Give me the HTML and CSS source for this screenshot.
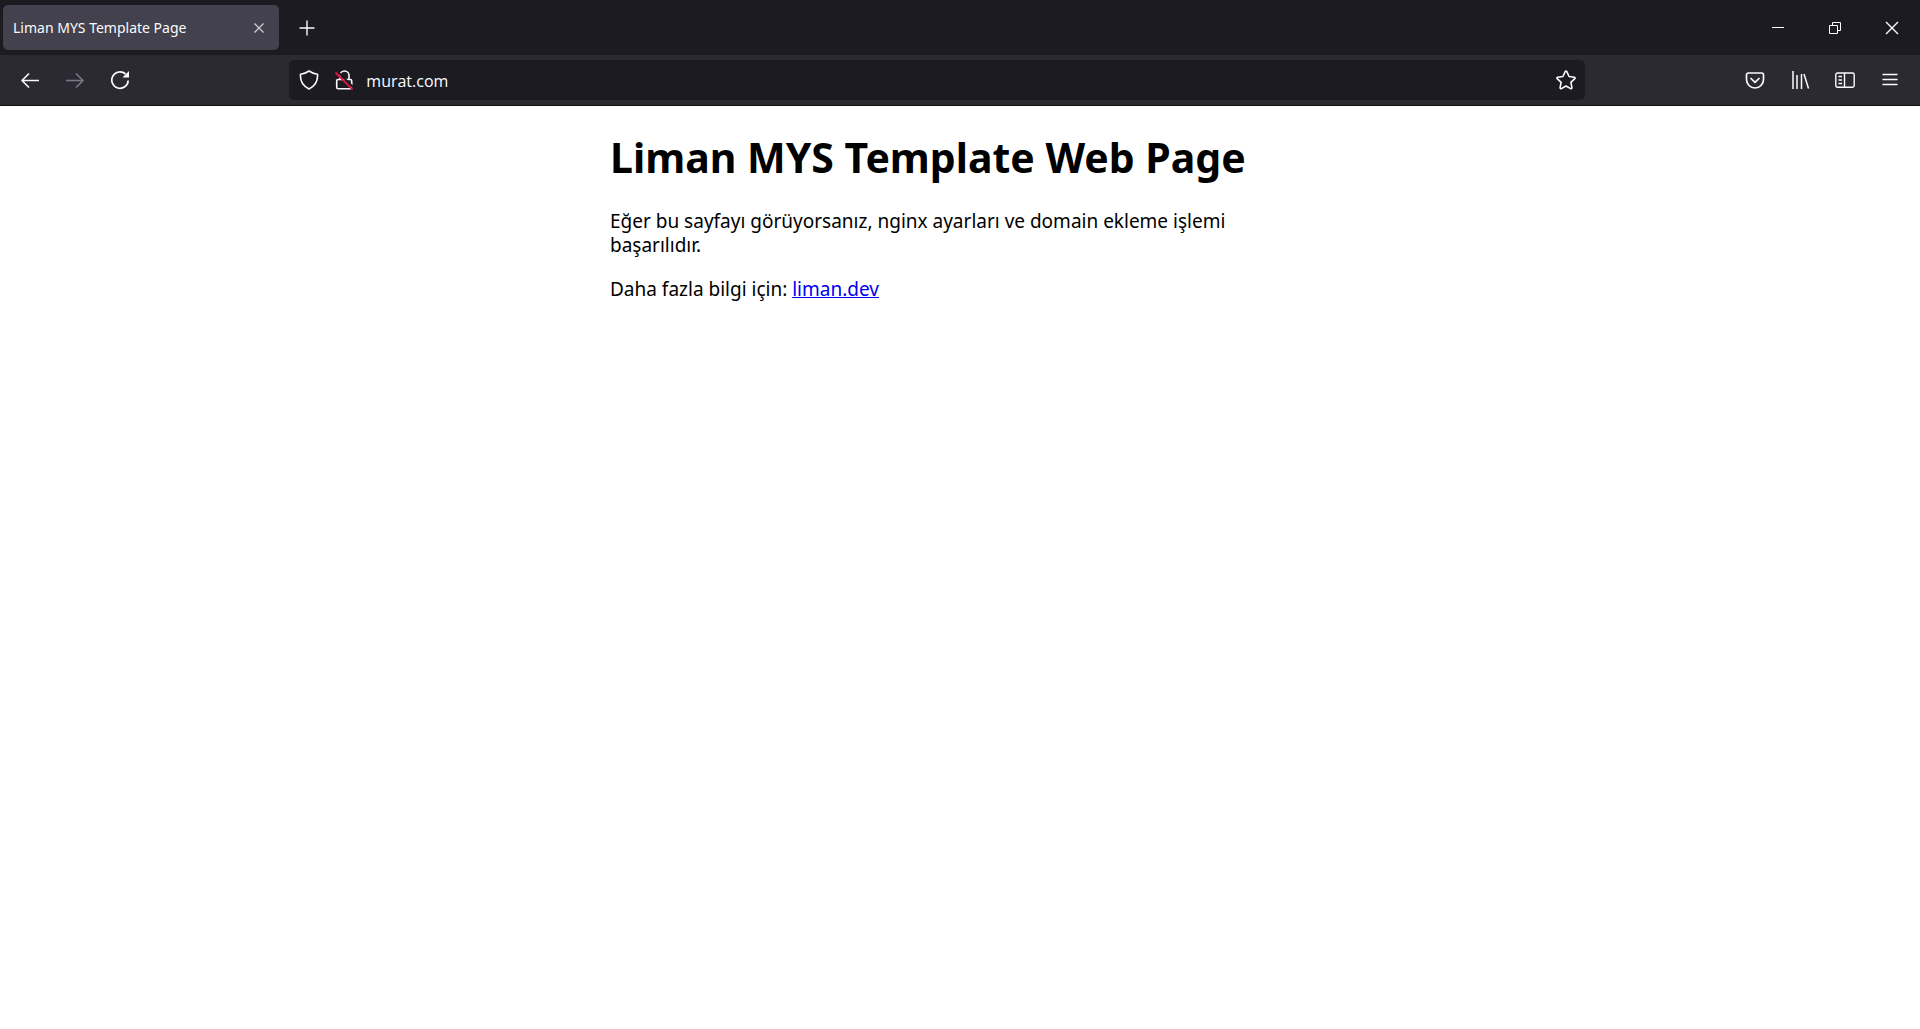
FILE: index.html
```html
<!DOCTYPE html>
<html lang="tr">
<head>
<meta charset="utf-8">
<title>Liman MYS Template Page</title>
<link rel="stylesheet" href="styles.css">
</head>
<body>
<header class="browser">
  <div class="tabbar">
    <div class="tab">
      <span class="tab-title">Liman MYS Template Page</span>
      <button class="tab-close" aria-label="Close tab"><svg width="12" height="12" viewBox="0 0 12 12"><path d="M1.5 1.5l9 9M10.500 1.500l-9 9"/></svg></button>
    </div>
    <button class="new-tab" aria-label="New tab"><svg width="16" height="16" viewBox="0 0 16 16"><path d="M8 .5v15M.5 8h15"/></svg></button>
    <div class="window-controls">
      <button class="window-button" aria-label="Minimize"><svg width="14" height="14" viewBox="0 0 14 14"><path d="M1 6.500h12" stroke-width="1"/></svg></button>
      <button class="window-button" aria-label="Restore"><svg width="14" height="14" viewBox="0 0 14 14"><path d="M1.500 4.500h8v8h-8zM4.500 4V1.500h8v8H10" stroke-width="1"/></svg></button>
      <button class="window-button" aria-label="Close"><svg width="14" height="14" viewBox="0 0 14 14"><path d="M1 1l12 12M13 1L1 13"/></svg></button>
    </div>
  </div>
  <nav class="toolbar">
    <button class="tool" aria-label="Back"><svg width="20" height="20" viewBox="0 0 20 20"><path d="M19 10.500H2M9 3.500l-7 7 7 7" stroke-width="1.600"/></svg></button>
    <button class="tool" aria-label="Forward" disabled><svg width="20" height="20" viewBox="0 0 20 20"><path d="M1 10.500h17M11 3.500l7 7-7 7" stroke-width="1.600"/></svg></button>
    <button class="tool" aria-label="Reload"><svg width="20" height="20" viewBox="0 0 20 20"><path d="M15.500 4A8.200 8.200 0 1 0 18.200 10.500" stroke-width="1.700"/><path class="solid" d="M19 1v6.500h-6.500z"/></svg></button>
    <div class="spring"></div>
    <div class="urlbar">
      <button class="url-icon" aria-label="Tracking protection"><svg width="20" height="20" viewBox="0 0 20 20"><path d="M10 1C7.500 2.800 5 3.700 1.500 4.200C1 10.500 3.800 16 10 19C16.200 16 19 10.500 18.500 4.200C15 3.700 12.500 2.800 10 1z" stroke-width="1.600"/></svg></button>
      <button class="url-icon" aria-label="Connection is not secure"><svg width="20" height="20" viewBox="0 0 20 20"><path d="M6 9.500V5.500a4.500 4.500 0 0 1 9 0v4h1.200a1.500 1.500 0 0 1 1.500 1.500v6.300a1.500 1.500 0 0 1-1.500 1.500H4.200a1.500 1.500 0 0 1-1.500-1.500V11a1.500 1.500 0 0 1 1.500-1.500H15" stroke-width="1.600"/><path class="gap" d="M3.500 1.500l16 16"/><path class="slash" d="M1.500 2.500l17 17"/></svg></button>
      <input class="address" type="text" aria-label="Address" value="murat.com">
      <button class="url-icon" aria-label="Bookmark this page"><svg width="20" height="20" viewBox="0 0 20 20"><path d="M9.200 1.600a.9.900 0 0 1 1.600 0l2.300 4.900 5.200.7a.9.900 0 0 1 .5 1.500l-3.900 3.700 1 5.300a.9.900 0 0 1-1.300.9L10 16l-4.600 2.600a.9.900 0 0 1-1.300-.9l1-5.300-3.900-3.700a.9.900 0 0 1 .5-1.500l5.200-.7z" stroke-width="1.600"/></svg></button>
    </div>
    <div class="spring"></div>
    <button class="tool" aria-label="Save to Pocket"><svg width="20" height="20" viewBox="0 0 20 20"><path d="M3.200 3h13.600A1.700 1.700 0 0 1 18.500 4.700V9.500a8.500 8.500 0 0 1-17 0V4.700A1.700 1.700 0 0 1 3.200 3zM5.500 8l4.500 4.300L14.500 8" stroke-width="1.700"/></svg></button>
    <button class="tool" aria-label="Library"><svg width="20" height="20" viewBox="0 0 20 20"><path d="M3 1v18M7 5v14M11.500 4v15M14 4l4.500 14.500" stroke-width="1.500"/></svg></button>
    <button class="tool" aria-label="Sidebars"><svg width="20" height="20" viewBox="0 0 20 20"><path d="M2.500 3h15A1.700 1.700 0 0 1 19.200 4.700v10.800a1.700 1.700 0 0 1-1.700 1.700h-15A1.700 1.700 0 0 1 .8 15.500V4.700A1.700 1.700 0 0 1 2.500 3zM9.500 3v14M3.500 6.500H7M3.500 10H7M3.500 13.500H7"/></svg></button>
    <button class="tool" aria-label="Menu"><svg width="20" height="20" viewBox="0 0 20 20"><path d="M3 4.500h14M3 9.500h14M3 14.500h14" stroke-linecap="round"/></svg></button>
  </nav>
</header>
<main class="page">
  <h1 class="heading">Liman MYS Template Web Page</h1>
  <p class="text">Eğer bu sayfayı görüyorsanız, nginx ayarları ve domain ekleme işlemi başarılıdır.</p>
  <p class="text">Daha fazla bilgi için: <a class="link" href="https://liman.dev">liman.dev</a></p>
</main>
</body>
</html>
```
FILE: styles.css
```css
* {
  box-sizing: border-box;
}

body {
  margin: 0;
  background: #fff;
  color: #000;
  font-family: "Noto Sans", "Open Sans", sans-serif;
}

button {
  display: flex;
  align-items: center;
  justify-content: center;
  flex: none;
  padding: 0;
  border: 0;
  background: none;
  color: #fbfbfe;
}

svg {
  display: block;
  fill: none;
  stroke: currentColor;
  stroke-width: 1.4;
  stroke-linejoin: round;
}

.browser {
  border-bottom: 1px solid #0c0c0d;
  background: #2b2a33;
  color: #fbfbfe;
}

.tabbar {
  display: flex;
  align-items: center;
  height: 55px;
  padding-left: 3px;
  background: #1c1b22;
}

.tab {
  display: flex;
  align-items: center;
  justify-content: space-between;
  width: 276px;
  height: 45px;
  padding: 0 5px 0 10px;
  border-radius: 5px;
  background: #42414d;
}

.tab-title {
  font-size: 14px;
}

.tab-close {
  width: 30px;
  height: 30px;
  color: #c8c8cf;
}

.new-tab {
  width: 45px;
  height: 45px;
  margin-left: 5px;
}

.window-controls {
  display: flex;
  margin-left: auto;
}

.window-button {
  width: 57px;
  height: 53px;
}

.toolbar {
  display: flex;
  align-items: center;
  height: 50px;
  padding: 0 8px 0 7px;
}

.tool {
  width: 45px;
  height: 40px;
}

.tool:disabled {
  color: #7b7a82;
}

.spring {
  flex: 1;
}

.urlbar {
  display: flex;
  align-items: center;
  width: 68%;
  height: 40px;
  padding: 0 1px 0 2px;
  border-radius: 5px;
  background: #1c1b22;
}

.url-icon {
  width: 35px;
  height: 36px;
}

.address {
  flex: 1;
  min-width: 0;
  padding: 2px 5px 0;
  border: 0;
  outline: 0;
  background: none;
  color: #fbfbfe;
  font-family: "Open Sans", sans-serif;
  font-size: 16px;
}

.solid {
  fill: currentColor;
  stroke: none;
}

.gap {
  stroke: #1c1b22;
  stroke-width: 2;
}

.slash {
  stroke: #e2143c;
  stroke-width: 1.8;
}

.page {
  max-width: 700px;
  margin: 0 auto;
  padding: 27px 0;
}

.heading {
  margin: 0 0 28px;
  font-size: 41px;
  line-height: 48px;
}

.text {
  max-width: 640px;
  margin: 0 0 20px;
  font-size: 19px;
  line-height: 24px;
}

.link {
  color: #0000ee;
  text-decoration-thickness: 1px;
}
```
